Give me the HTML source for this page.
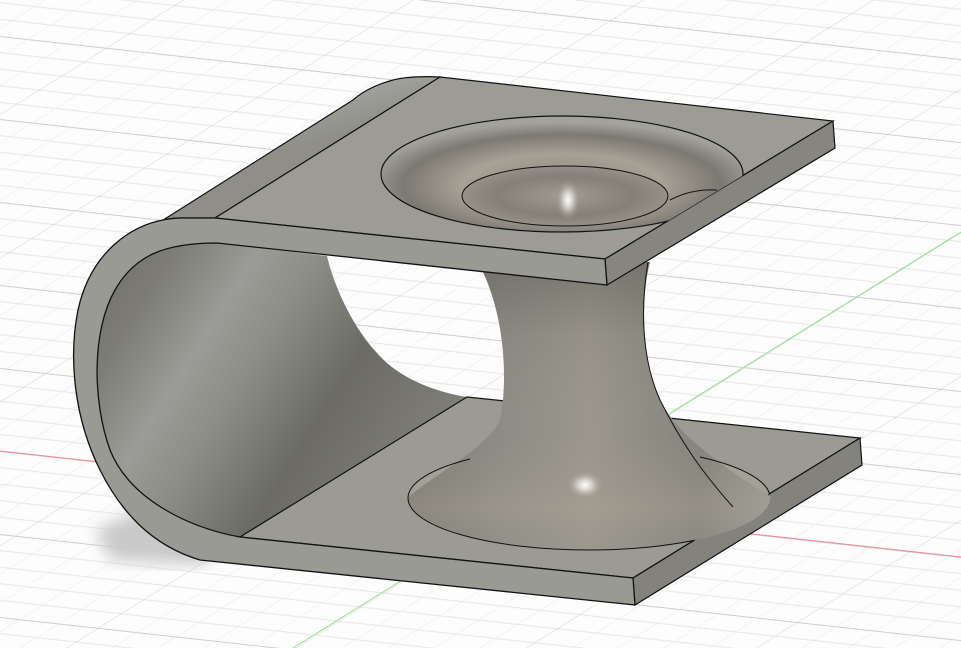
<!DOCTYPE html>
<html><head><meta charset="utf-8"><style>
html,body{margin:0;padding:0;background:#fdfdfd;}
svg{display:block}
</style></head><body>
<svg width="961" height="648" viewBox="0 0 961 648" xmlns="http://www.w3.org/2000/svg">
<defs>
<pattern id="hz" width="961" height="83" patternUnits="userSpaceOnUse" patternTransform="translate(0,451) skewY(6.3)">
<line x1="0" y1="16.6" x2="961" y2="16.6" stroke="#e6e6e6" stroke-width="1"/>
<line x1="0" y1="33.2" x2="961" y2="33.2" stroke="#e6e6e6" stroke-width="1"/>
<line x1="0" y1="49.8" x2="961" y2="49.8" stroke="#e6e6e6" stroke-width="1"/>
<line x1="0" y1="66.4" x2="961" y2="66.4" stroke="#e6e6e6" stroke-width="1"/>
<line x1="0" y1="0.5" x2="961" y2="0.5" stroke="#cdcdcd" stroke-width="1"/>
</pattern>
<pattern id="vt" width="230" height="648" patternUnits="userSpaceOnUse" patternTransform="translate(1333,0) skewX(-58)">
<line x1="46" y1="0" x2="46" y2="648" stroke="#e6e6e6" stroke-width="0.8"/>
<line x1="92" y1="0" x2="92" y2="648" stroke="#e6e6e6" stroke-width="0.8"/>
<line x1="138" y1="0" x2="138" y2="648" stroke="#e6e6e6" stroke-width="0.8"/>
<line x1="184" y1="0" x2="184" y2="648" stroke="#e6e6e6" stroke-width="0.8"/>
<line x1="0.5" y1="0" x2="0.5" y2="648" stroke="#cdcdcd" stroke-width="0.8"/>
</pattern>
<linearGradient id="inner" x1="0" y1="0" x2="1" y2="0.5">
<stop offset="0" stop-color="#6e6d67"/>
<stop offset="0.18" stop-color="#7d7c76"/>
<stop offset="0.36" stop-color="#9b9c97"/>
<stop offset="0.5" stop-color="#8d8d87"/>
<stop offset="0.72" stop-color="#6b6a64"/>
<stop offset="1" stop-color="#7f7e78"/>
</linearGradient>
<linearGradient id="curl" x1="0.3" y1="0" x2="0.55" y2="0.45">
<stop offset="0" stop-color="#b9bab4"/>
<stop offset="0.5" stop-color="#a3a39d"/>
<stop offset="1" stop-color="#8f8e88"/>
</linearGradient>
<radialGradient id="bowl" cx="0.5" cy="0.6" r="0.55">
<stop offset="0" stop-color="#8c877d"/>
<stop offset="0.5" stop-color="#a7a196"/>
<stop offset="0.8" stop-color="#7c7972"/>
<stop offset="1" stop-color="#a3a39c"/>
</radialGradient>
<radialGradient id="bowl2" cx="0.5" cy="0.5" r="0.55">
<stop offset="0" stop-color="#a19c92"/>
<stop offset="0.6" stop-color="#858076"/>
<stop offset="1" stop-color="#9a968c"/>
</radialGradient>
<radialGradient id="hl" cx="0.5" cy="0.5" r="0.5">
<stop offset="0" stop-color="#ffffff"/>
<stop offset="0.4" stop-color="#e0ddd6" stop-opacity="0.8"/>
<stop offset="1" stop-color="#a09c92" stop-opacity="0"/>
</radialGradient>
<linearGradient id="stem" x1="0" y1="0" x2="1" y2="0">
<stop offset="0" stop-color="#7a7871"/>
<stop offset="0.25" stop-color="#8d8b84"/>
<stop offset="0.5" stop-color="#9b978d"/>
<stop offset="0.8" stop-color="#85837c"/>
<stop offset="1" stop-color="#9a9993"/>
</linearGradient>
<linearGradient id="stemv" x1="0" y1="0" x2="0" y2="1">
<stop offset="0" stop-color="#5f5d57" stop-opacity="0.55"/>
<stop offset="0.25" stop-color="#5f5d57" stop-opacity="0.1"/>
<stop offset="0.6" stop-color="#a39d90" stop-opacity="0"/>
<stop offset="0.85" stop-color="#b0a898" stop-opacity="0.35"/>
<stop offset="1" stop-color="#9c9b94" stop-opacity="0.2"/>
</linearGradient>
<radialGradient id="bowlb" cx="0.5" cy="0.4" r="0.6">
<stop offset="0" stop-color="#9a958b"/>
<stop offset="0.6" stop-color="#aaa498"/>
<stop offset="1" stop-color="#9c9b94"/>
</radialGradient>
<filter id="blur"><feGaussianBlur stdDeviation="8"/></filter>
<clipPath id="bp"><path d="M240,537 L467,397 L860,438 L633,578 Z"/></clipPath>
<clipPath id="tp"><path d="M215,218 L440,77 L833,121 L605,259 Z"/></clipPath>
<clipPath id="sc"><rect x="0" y="0" width="961" height="498"/><ellipse cx="589" cy="498" rx="181" ry="52"/></clipPath>
</defs>
<rect width="961" height="648" fill="#fdfdfd"/>
<rect width="961" height="648" fill="url(#hz)"/>
<rect width="961" height="648" fill="url(#vt)"/>
<line x1="0" y1="451" x2="961" y2="557" stroke="#f08a8a" stroke-width="1"/>
<line x1="293" y1="648" x2="961" y2="232" stroke="#8fe08f" stroke-width="1"/>
<path d="M95,530 L150,505 L230,545 L200,565 L110,560 Z" fill="#c9c9c9" filter="url(#blur)"/>
<path d="M217,243 C165,243 135,255 115,290 C92,330 92,400 110,450 C130,500 190,528 240,537 L467,397 C440,393 400,380 377,353 C355,330 335,290 327,256 Z" fill="url(#inner)"/>
<path d="M215,218 L440,77 C420,76 405,77 393,80 C375,85 362,92 353,100 L160,222 C165,219 172,218 180,218 Z" fill="url(#curl)" stroke="#111" stroke-width="1.2"/>
<path d="M240,537 L467,397 L860,438 L633,578 Z" fill="#9b9a93" stroke="#111" stroke-width="1.2"/>
<path d="M633,578 L860,438 L862,465 L635,605 Z" fill="#83827c" stroke="#111" stroke-width="1.2"/>
<g clip-path="url(#bp)">
<ellipse cx="589" cy="498" rx="181" ry="52" fill="url(#bowlb)"/>
</g>
<g clip-path="url(#sc)">
<path d="M483,272 L650,262 C640,300 642,360 660,400 C680,440 730,470 775,500 C760,545 660,552 589,552 C500,552 420,535 405,500 C440,470 485,450 500,420 C508,380 505,320 483,272 Z" fill="url(#stem)"/>
<path d="M483,272 L650,262 C640,300 642,360 660,400 C680,440 730,470 775,500 C760,545 660,552 589,552 C500,552 420,535 405,500 C440,470 485,450 500,420 C508,380 505,320 483,272 Z" fill="url(#stemv)"/>
</g>
<ellipse cx="585" cy="485" rx="18" ry="14" fill="url(#hl)"/>
<path d="M648,262 C640,310 642,360 660,400 C680,440 700,470 733,507" fill="none" stroke="#111" stroke-width="1"/>
<g clip-path="url(#bp)" fill="none" stroke="#111" stroke-width="1">
<path d="M408,498 A181,52 0 0 0 770,498 A181,52 0 0 0 700,457"/>
<path d="M408,498 A181,52 0 0 1 470,459"/>
</g>
<path d="M215,218 L440,77 L833,121 L605,259 Z" fill="#9c9b94" stroke="#111" stroke-width="1.2"/>
<path d="M605,259 L833,121 L835,148 L607,285 Z" fill="#86857f" stroke="#111" stroke-width="1.2"/>
<g clip-path="url(#tp)">
<ellipse cx="562" cy="174" rx="181" ry="58" fill="url(#bowl)" stroke="#111" stroke-width="1.2"/>
<ellipse cx="565" cy="196" rx="103" ry="30" fill="url(#bowl2)" stroke="#111" stroke-width="1"/>
<ellipse cx="568" cy="200" rx="12" ry="20" fill="url(#hl)"/>
<path d="M670,200 C685,192 700,189 717,190" fill="none" stroke="#111" stroke-width="1"/>
</g>
<path d="M605,259 L215,218 L180,218 C130,220 90,255 78,310 C68,360 75,420 100,470 C120,510 150,545 200,560 L635,605 L633,578 L240,537 C190,528 130,500 110,450 C92,400 92,330 115,290 C135,255 165,243 217,243 L607,285 Z" fill="#9a9a94" stroke="#111" stroke-width="1.3" stroke-linejoin="round"/>
</svg>
</body></html>
